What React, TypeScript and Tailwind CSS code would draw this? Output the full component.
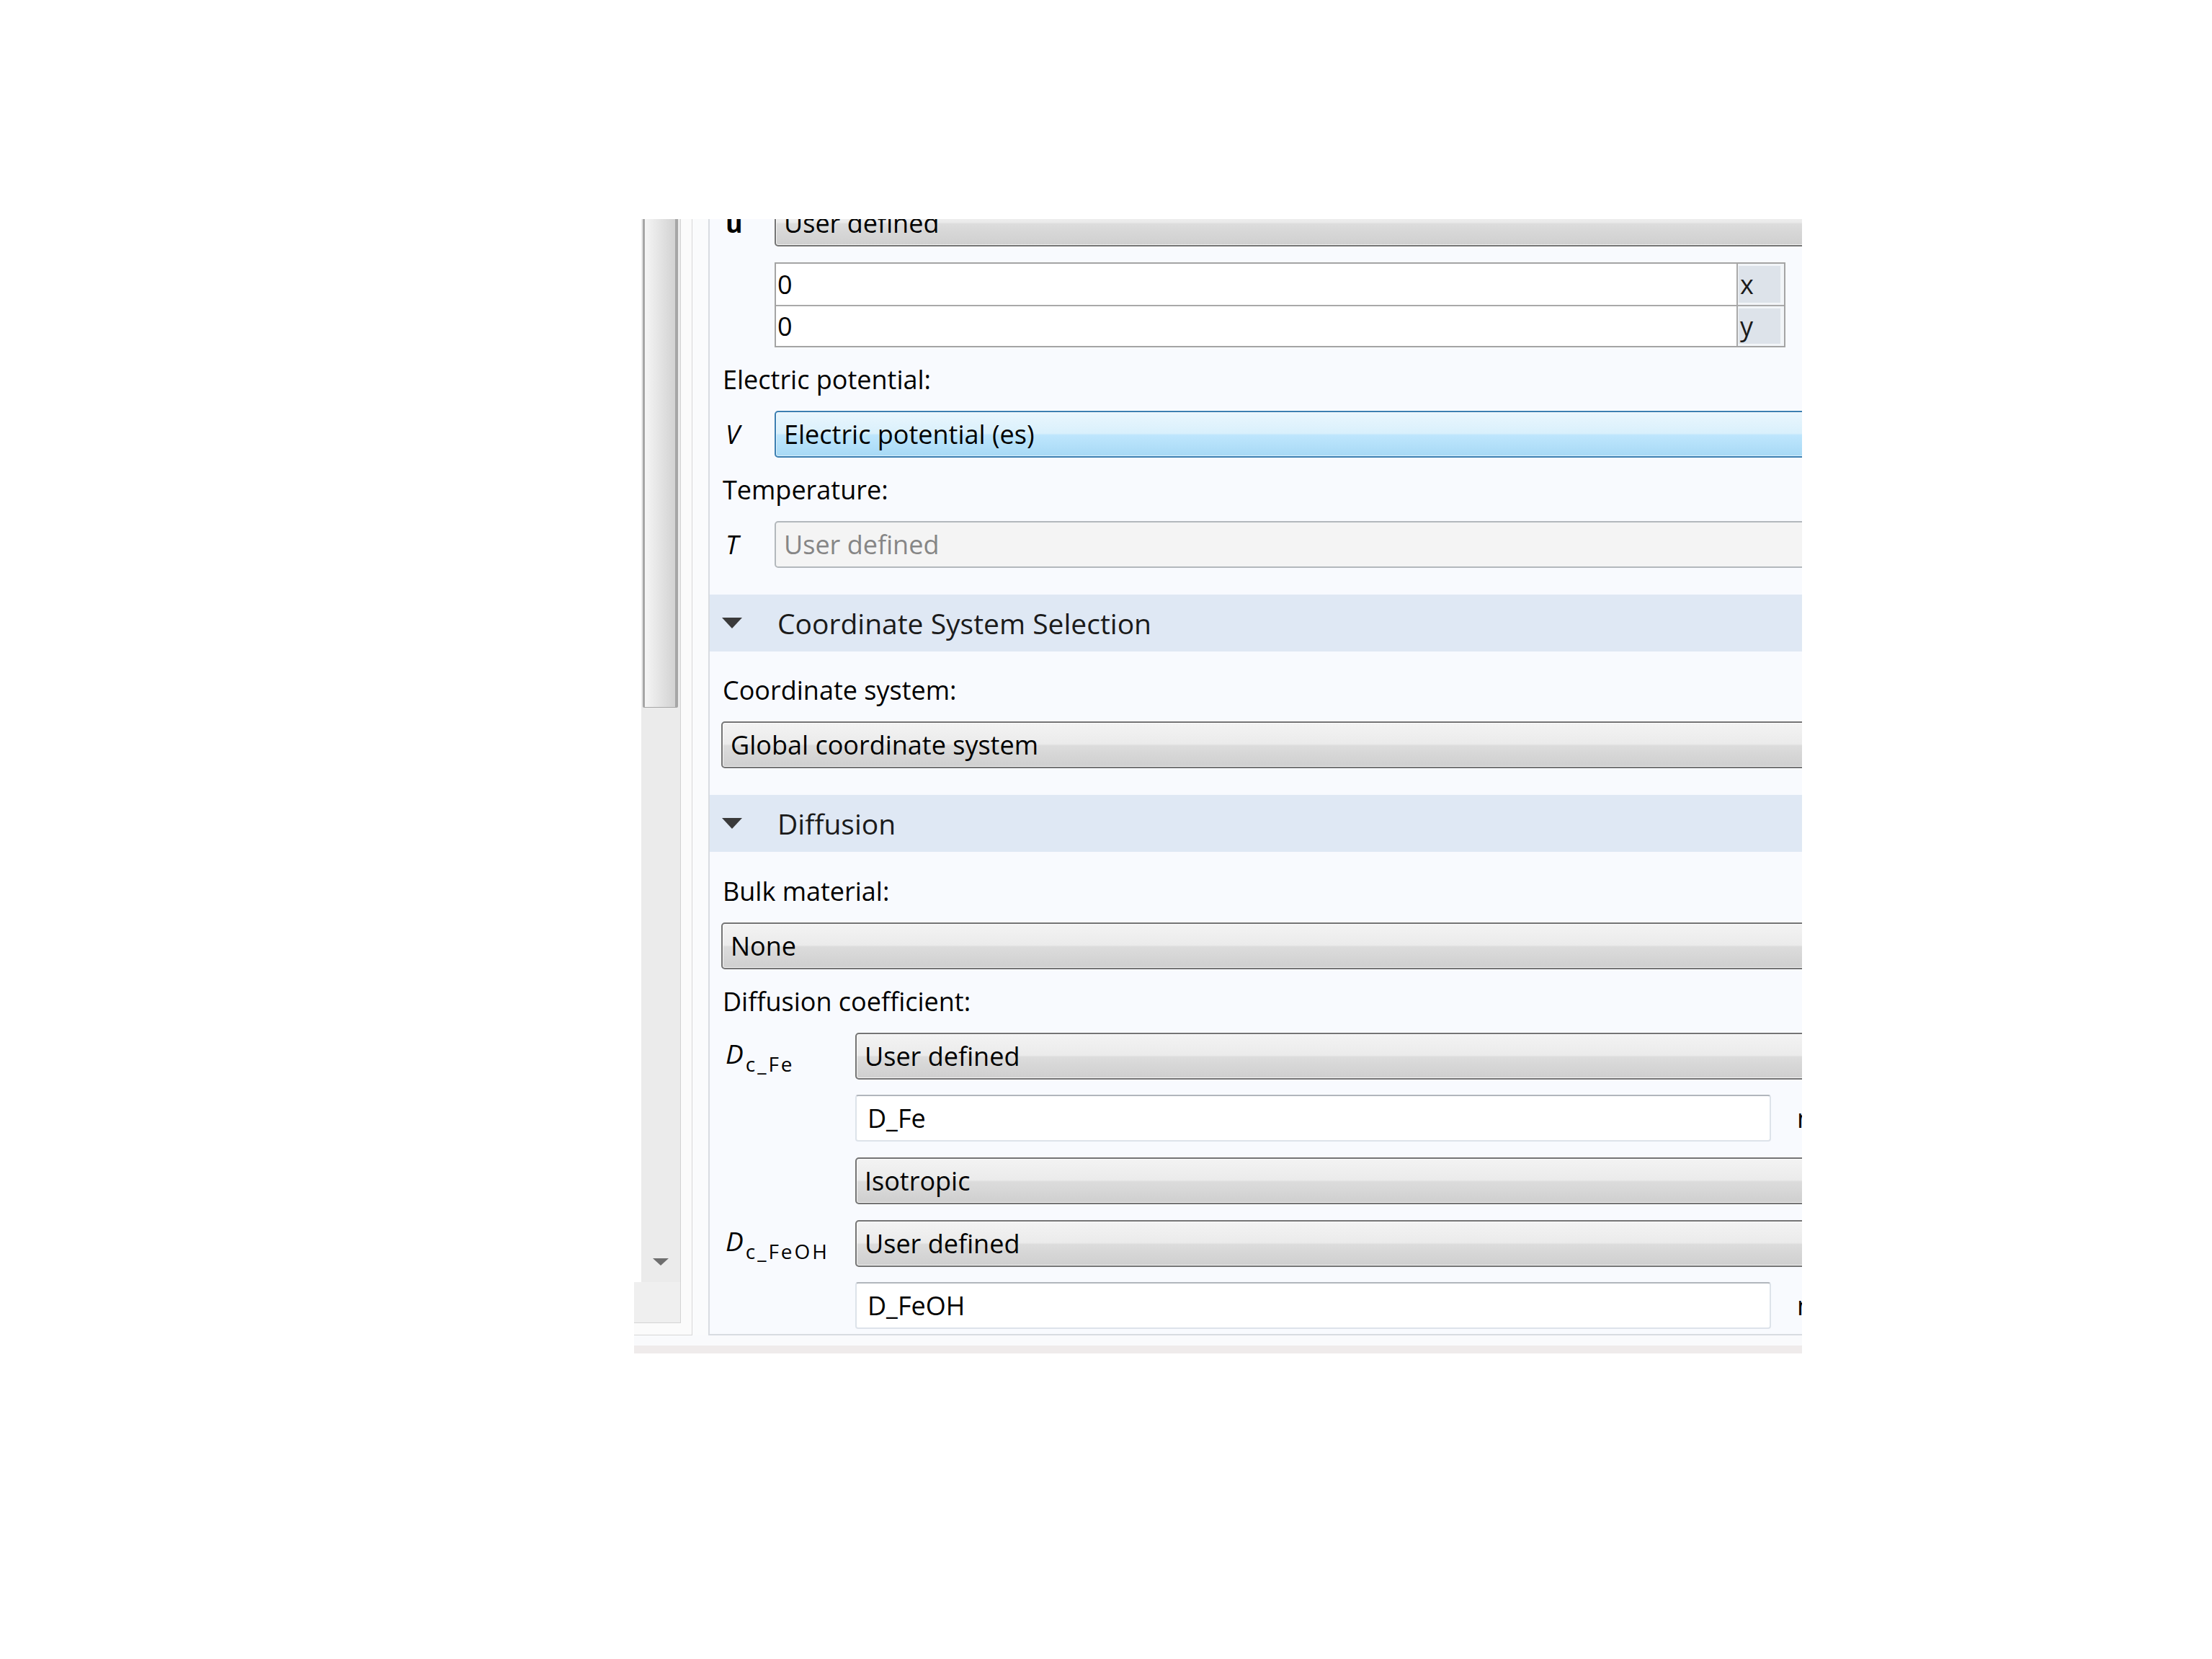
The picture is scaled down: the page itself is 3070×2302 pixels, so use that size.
import React from "react";

type Variant = "normal" | "hover" | "disabled";

function Combo({ children, variant = "normal" }: { children: React.ReactNode; variant?: Variant }) {
  const base =
    "h-[65px] flex-1 min-w-0 flex items-center pl-[11px] rounded-[5px] border-2 text-[36px] leading-[49px] whitespace-nowrap overflow-hidden";
  const v =
    variant === "hover"
      ? "border-[#3c7fb1] bg-[linear-gradient(to_bottom,#eaf6fd_0%,#d9f0fc_48%,#bee6fd_52%,#a7d9f5_100%)] text-black shadow-[inset_0_0_0_1px_rgba(255,255,255,0.6)]"
      : variant === "disabled"
      ? "border-[#b3b8bc] bg-[#f4f4f4] text-[#868686]"
      : "border-[#747474] bg-[linear-gradient(to_bottom,#f3f3f3_0%,#ebebeb_48%,#dcdcdc_52%,#cfcfcf_100%)] text-black shadow-[inset_0_0_0_1px_rgba(255,255,255,0.75)]";
  return <div className={`${base} ${v}`}>{children}</div>;
}

function TextField({ children }: { children: React.ReactNode }) {
  return (
    <div className="h-[65px] w-[1271px] flex items-center pl-[15px] rounded-[4px] border-2 border-[#dde3ea] border-t-[#b1b6bc] bg-white text-[36px] leading-[49px] text-black whitespace-nowrap">
      {children}
    </div>
  );
}

function Label({ children }: { children: React.ReactNode }) {
  return <div className="pl-[2px] pt-[20px] pb-[19px] text-[36px] leading-[49px] text-black whitespace-nowrap">{children}</div>;
}

function Header({ children }: { children: React.ReactNode }) {
  return (
    <div className="h-[79px] bg-[#dfe8f4] flex items-center pl-[17px]">
      <svg width="28" height="15" viewBox="0 0 28 15" className="shrink-0">
        <polygon points="0,0 28,0 14,15" fill="#3a3a3a" />
      </svg>
      <span className="ml-[49px] text-[39px] leading-[52px] text-[#1b1b1b] whitespace-nowrap">{children}</span>
    </div>
  );
}

function Sym({ children, bold }: { children: React.ReactNode; bold?: boolean }) {
  return (
    <div
      className={`w-[74px] shrink-0 h-[65px] pl-[6px] text-[36px] leading-[65px] text-black ${
        bold ? "font-bold" : "italic"
      }`}
    >
      {children}
    </div>
  );
}

function DSym({ sub }: { sub: string }) {
  return (
    <div className="w-[186px] shrink-0 h-[65px] pl-[6px] leading-[58px] text-black whitespace-nowrap">
      <span className="italic text-[37px]">D</span>
      <span className="text-[28px] tracking-[3px] align-[-11px] ml-[3px]">{sub}</span>
    </div>
  );
}

function VecRow({ value, axis, top }: { value: string; axis: string; top?: boolean }) {
  return (
    <div className={`flex h-[57px] ${top ? "" : "border-t-2 border-[#a9a9a9]"}`}>
      <div className="flex-1 bg-white pl-[2px] flex items-center text-[36px] leading-[49px]">{value}</div>
      <div className="w-[66px] border-l-2 border-[#a9a9a9] bg-[#f2f5f8] pl-[1px] pr-[5px] py-[3px]">
        <div className="h-full bg-[#dde3ea] flex items-center pl-[2px] text-[36px] leading-[49px] text-[#1a1a1a]">
          {axis}
        </div>
      </div>
    </div>
  );
}

export default function App() {
  return (
    <div className="w-[3070px] h-[2302px] bg-white overflow-hidden font-['Open_Sans','Noto_Sans',sans-serif]">
      <div className="ml-[880px] mt-[304px] w-[1621px]">
        <div className="flex h-[1549px]">
          {/* left pane with scrollbar */}
          <div className="w-[81px] shrink-0 flex flex-col border-r border-b border-[#d7d7d7]">
            <div className="flex-1 flex min-h-0">
              <div className="w-[10px] bg-white" />
              <div className="w-[55px] flex flex-col bg-[#ebebeb] border-r border-[#d2d2d2]">
                <div className="h-[678px] ml-[2px] mr-[3px] border-l-[3px] border-r-[4px] border-b border-[#a6a6a6] bg-[linear-gradient(to_right,#f5f5f5,#d2d2d2)] rounded-b-[2px]" />
                <div className="flex-1 flex flex-col justify-end items-center pb-[23px]">
                  <svg width="22" height="10" viewBox="0 0 22 10">
                    <polygon points="0,0 22,0 11,10" fill="#6e6e6e" />
                  </svg>
                </div>
              </div>
              <div className="flex-1 bg-[#fbfbfb]" />
            </div>
            <div className="h-[57px] flex">
              <div className="w-[65px] bg-[#efefef] border-b border-r border-[#d4d4d4]" />
              <div className="flex-1 bg-[#fbfbfb]" />
            </div>
            <div className="h-[16px] bg-[#fbfbfb]" />
          </div>

          <div className="w-[22px] shrink-0 bg-[#fafbfc]" />

          {/* settings pane */}
          <div className="flex-1 min-w-0 border-l-2 border-b-2 border-[#d8dce1] bg-[#f8fafe] overflow-hidden">
            <div className="-mt-[27px] w-[1616px] flex flex-col">
              <div className="pl-[16px] flex flex-col">
                <div className="flex">
                  <Sym bold>u</Sym>
                  <Combo>User defined</Combo>
                </div>
                <div className="mt-[22px] ml-[74px] w-[1403px] border-2 border-[#a4a4a4] flex flex-col">
                  <VecRow value="0" axis="x" top />
                  <VecRow value="0" axis="y" />
                </div>
                <Label>Electric potential:</Label>
                <div className="flex">
                  <Sym>V</Sym>
                  <Combo variant="hover">Electric potential (es)</Combo>
                </div>
                <Label>Temperature:</Label>
                <div className="flex">
                  <Sym>T</Sym>
                  <Combo variant="disabled">User defined</Combo>
                </div>
              </div>

              <div className="mt-[37px]">
                <Header>Coordinate System Selection</Header>
              </div>

              <div className="pl-[16px] pt-[9px] flex flex-col">
                <Label>Coordinate system:</Label>
                <div className="flex">
                  <Combo>Global coordinate system</Combo>
                </div>
              </div>

              <div className="mt-[37px]">
                <Header>Diffusion</Header>
              </div>

              <div className="pl-[16px] pt-[10px] flex flex-col">
                <Label>Bulk material:</Label>
                <div className="flex">
                  <Combo>None</Combo>
                </div>
                <Label>Diffusion coefficient:</Label>
                <div className="flex flex-col">
                  <div className="flex">
                    <DSym sub="c_Fe" />
                    <Combo>User defined</Combo>
                  </div>
                  <div className="flex items-center mt-[21px] ml-[186px]">
                    <TextField>D_Fe</TextField>
                    <span className="ml-[36px] text-[36px] leading-[49px] whitespace-nowrap">m²/s</span>
                  </div>
                  <div className="flex mt-[22px] ml-[186px]">
                    <Combo>Isotropic</Combo>
                  </div>
                  <div className="flex mt-[22px]">
                    <DSym sub="c_FeOH" />
                    <Combo>User defined</Combo>
                  </div>
                  <div className="flex items-center mt-[21px] ml-[186px]">
                    <TextField>D_FeOH</TextField>
                    <span className="ml-[36px] text-[36px] leading-[49px] whitespace-nowrap">m²/s</span>
                  </div>
                </div>
              </div>
            </div>
          </div>
        </div>
        <div className="h-[14px] bg-[#f9fafc]" />
        <div className="h-[11px] bg-[#efebeb]" />
      </div>
    </div>
  );
}
